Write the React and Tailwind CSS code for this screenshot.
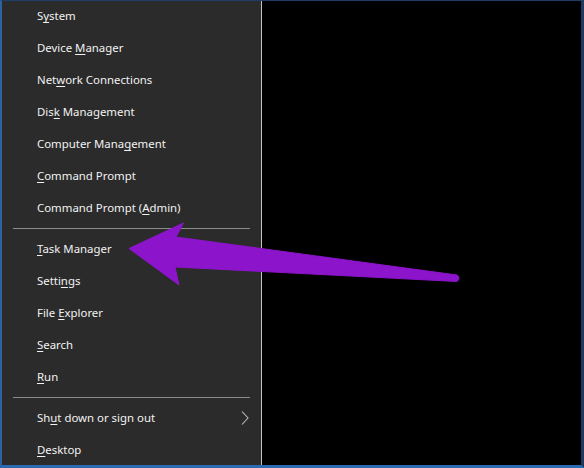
import React from "react";

const U = ({ children }) => (
  <span className="underline decoration-1 underline-offset-[2px]">{children}</span>
);

const Item = ({ children, chevron }) => (
  <div className="h-8 shrink-0 flex items-center pl-[37px] pr-[10px] justify-between">
    <span className="text-[11.4px] leading-none text-[#f2f2f2]">{children}</span>
    {chevron && (
      <svg width="10" height="16" viewBox="0 0 10 16" className="mr-[1px]">
        <polyline points="2,1.5 8,8 2,14.5" fill="none" stroke="#bdbdbd" strokeWidth="1.1" />
      </svg>
    )}
  </div>
);

const Sep = () => (
  <div className="h-[9px] shrink-0 flex items-center pl-[13px] pr-[11px]">
    <div className="h-px w-full bg-[#8c8c8c]" />
  </div>
);

export default function App() {
  return (
    <div
      className="relative w-[584px] h-[468px] flex bg-black overflow-hidden"
      style={{ fontFamily: '"Noto Sans", "Open Sans", sans-serif' }}
    >
      <div className="w-[262px] shrink-0 h-full bg-[#2b2b2b] border-r border-[#c4c4c4] flex flex-col">
        <Item>S<U>y</U>stem</Item>
        <Item>Device <U>M</U>anager</Item>
        <Item>Net<U>w</U>ork Connections</Item>
        <Item>Dis<U>k</U> Management</Item>
        <Item>Computer Mana<U>g</U>ement</Item>
        <Item><U>C</U>ommand Prompt</Item>
        <Item>Command Prompt (<U>A</U>dmin)</Item>
        <Sep />
        <Item><U>T</U>ask Manager</Item>
        <Item>Setti<U>n</U>gs</Item>
        <Item>File <U>E</U>xplorer</Item>
        <Item><U>S</U>earch</Item>
        <Item><U>R</U>un</Item>
        <Sep />
        <Item chevron>Sh<U>u</U>t down or sign out</Item>
        <Item><U>D</U>esktop</Item>
      </div>
      <div className="flex-1 bg-black" />
      <div className="absolute inset-0 pointer-events-none border-l-2 border-t-[1px] border-r-[3px] border-b-[3px] border-l-[#2e62a3] border-t-[#1e3d66] border-r-[#1e3a63] border-b-[#2a6ab0]" />
      <svg
        className="absolute left-0 top-0 pointer-events-none"
        width="584"
        height="468"
        viewBox="0 0 584 468"
      >
        <path
          d="M129,248.5 L183.5,223 L176,237 L457,275 Q461,278 457,281.5 L175,267 L179,285 Z"
          fill="#8c14cb"
          stroke="#8c14cb"
          strokeWidth="1"
          strokeLinejoin="round"
        />
      </svg>
    </div>
  );
}
